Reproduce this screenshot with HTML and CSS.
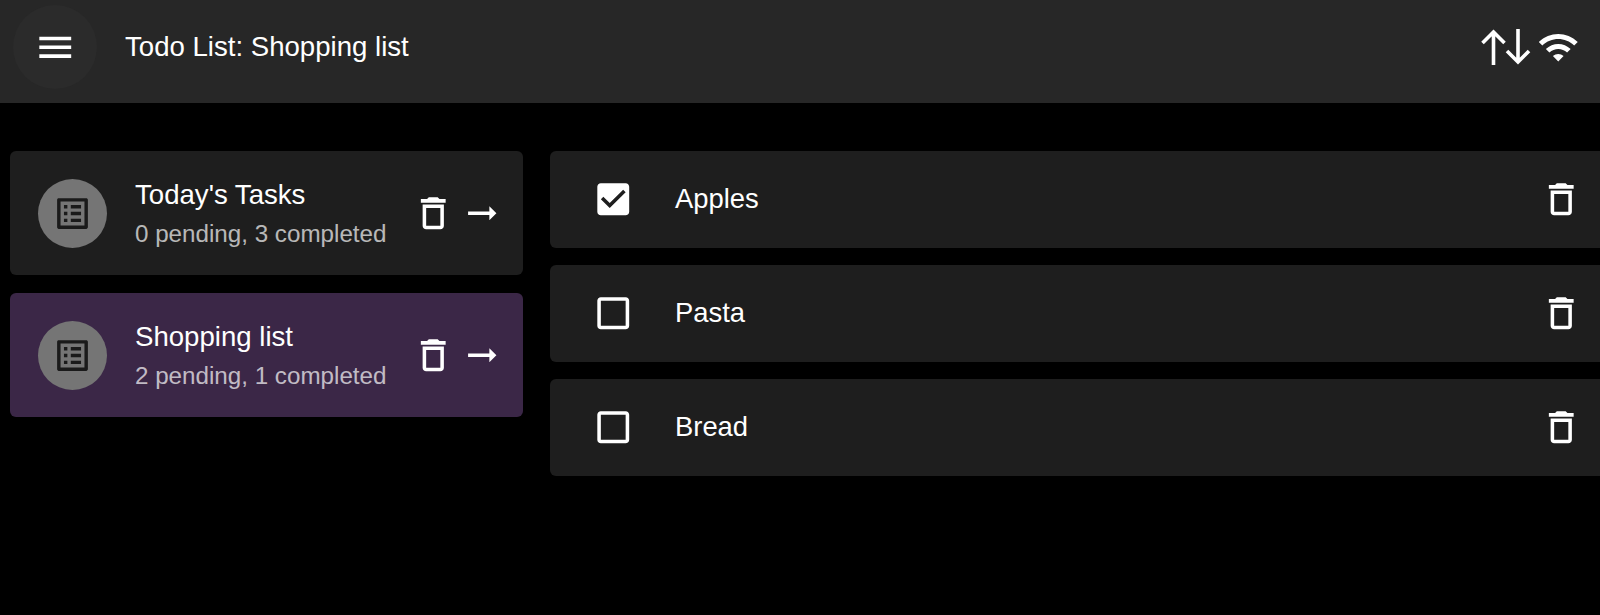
FILE: index.html
```html
<!DOCTYPE html>
<html lang="en">
<head>
  <meta charset="UTF-8" />
  <meta name="viewport" content="width=device-width, initial-scale=1.0"/>
  <title>Todo List: Shopping list</title>
  <link rel="stylesheet" href="styles.css">
</head>
<body>
  <svg class="icon-defs" aria-hidden="true">
    <symbol id="i-menu" viewBox="0 0 24 24"><path d="M3 18h18v-2H3v2zm0-5h18v-2H3v2zm0-7v2h18V6H3z"/></symbol>
    <symbol id="i-wifi" viewBox="0 0 24 24"><path d="M1 9l2 2c4.97-4.97 13.03-4.97 18 0l2-2C16.93 2.93 7.08 2.93 1 9zm8 8l3 3 3-3c-1.65-1.66-4.34-1.66-6 0zm-4-4l2 2c2.76-2.76 7.24-2.76 10 0l2-2C15.14 9.14 8.87 9.14 5 13z"/></symbol>
    <symbol id="i-list" viewBox="0 0 24 24"><path d="M19 5v14H5V5h14m1.1-2H3.9c-.5 0-.9.4-.9.9v16.2c0 .4.4.9.9.9h16.2c.4 0 .9-.5.9-.9V3.9c0-.5-.5-.9-.9-.9zM11 7h6v2h-6V7zm0 4h6v2h-6v-2zm0 4h6v2h-6zM7 7h2v2H7zm0 4h2v2H7zm0 4h2v2H7z"/></symbol>
    <symbol id="i-trash" viewBox="0 0 24 24"><path d="M16 9v10H8V9h8m-1.5-6h-5l-1 1H5v2h14V4h-3.5l-1-1zM18 7H6v12c0 1.1.9 2 2 2h8c1.1 0 2-.9 2-2V7z"/></symbol>
    <symbol id="i-arrow" viewBox="0 0 24 24"><path d="M16.01 11H4v2h12.01v3L20 12l-3.99-4z"/></symbol>
    <symbol id="i-checked" viewBox="0 0 24 24"><path d="M19 3H5c-1.11 0-2 .9-2 2v14c0 1.1.89 2 2 2h14c1.11 0 2-.9 2-2V5c0-1.1-.89-2-2-2zm-9 14l-5-5 1.41-1.41L10 14.17l7.59-7.59L19 8l-9 9z"/></symbol>
    <symbol id="i-blank" viewBox="0 0 24 24"><path d="M19 5v14H5V5h14m0-2H5c-1.1 0-2 .9-2 2v14c0 1.1.9 2 2 2h14c1.1 0 2-.9 2-2V5c0-1.1-.9-2-2-2z"/></symbol>
  </svg>

  <header class="app-bar">
    <button class="menu-btn"><svg class="icon"><use href="#i-menu"/></svg></button>
    <h1 class="app-title">Todo List: Shopping list</h1>
    <div class="status-icons">
      <svg class="sync-icon" viewBox="0 0 50 36" fill="none" stroke="#fff" stroke-width="3.6">
        <path d="M12.5 36V3M1.5 14L12.5 3L23.5 14"/>
        <path d="M37 0V33M26 22L37 33L48 22"/>
      </svg>
      <svg class="icon"><use href="#i-wifi"/></svg>
    </div>
  </header>

  <main class="content">
    <section class="lists">
      <div class="list-card">
        <div class="avatar"><svg class="icon"><use href="#i-list"/></svg></div>
        <div class="list-text">
          <div class="list-name">Today's Tasks</div>
          <div class="list-sub">0 pending, 3 completed</div>
        </div>
        <svg class="icon"><use href="#i-trash"/></svg>
        <svg class="icon"><use href="#i-arrow"/></svg>
      </div>
      <div class="list-card selected">
        <div class="avatar"><svg class="icon"><use href="#i-list"/></svg></div>
        <div class="list-text">
          <div class="list-name">Shopping list</div>
          <div class="list-sub">2 pending, 1 completed</div>
        </div>
        <svg class="icon"><use href="#i-trash"/></svg>
        <svg class="icon"><use href="#i-arrow"/></svg>
      </div>
    </section>

    <section class="items">
      <div class="item-row">
        <svg class="icon"><use href="#i-checked"/></svg>
        <span class="item-name">Apples</span>
        <svg class="icon"><use href="#i-trash"/></svg>
      </div>
      <div class="item-row">
        <svg class="icon"><use href="#i-blank"/></svg>
        <span class="item-name">Pasta</span>
        <svg class="icon"><use href="#i-trash"/></svg>
      </div>
      <div class="item-row">
        <svg class="icon"><use href="#i-blank"/></svg>
        <span class="item-name">Bread</span>
        <svg class="icon"><use href="#i-trash"/></svg>
      </div>
    </section>
  </main>
</body>
</html>
```

FILE: styles.css
```css
html, body {
  margin: 0;
  height: 100%;
  overflow: hidden;
}

body {
  background: #000;
  color: #fff;
  font-family: "Liberation Sans", Arial, sans-serif;
}

.icon-defs {
  display: none;
}

.icon {
  width: 42.5px;
  height: 42.5px;
  flex: none;
  fill: #fff;
}

.app-bar {
  display: flex;
  align-items: center;
  height: 103px;
  box-sizing: border-box;
  padding: 5px 21px 14px 13px;
  background: #272727;
}

.menu-btn {
  display: flex;
  align-items: center;
  justify-content: center;
  width: 84px;
  height: 84px;
  padding: 0;
  border: none;
  border-radius: 50%;
  background: #2b2b2b;
}

.app-title {
  margin: 0 0 0 28px;
  font-size: 27.6px;
  font-weight: 400;
}

.status-icons {
  display: flex;
  align-items: center;
  gap: 6px;
  margin-left: auto;
}

.sync-icon {
  width: 50px;
  height: 36px;
}

.content {
  display: flex;
  gap: 27px;
  padding: 48px 0 0 10px;
  margin-right: -12px;
}

.lists {
  display: flex;
  flex-direction: column;
  gap: 18px;
  width: 513px;
  flex: none;
}

.list-card {
  display: flex;
  align-items: center;
  gap: 6px;
  height: 124px;
  box-sizing: border-box;
  padding: 0 20px 0 28px;
  background: #1e1e1e;
  border-radius: 6px;
}

.list-card.selected {
  background: #3b2747;
}

.avatar {
  display: flex;
  align-items: center;
  justify-content: center;
  width: 69px;
  height: 69px;
  flex: none;
  margin-right: 22px;
  border-radius: 50%;
  background: #757575;
}

.avatar .icon {
  width: 41px;
  height: 41px;
  fill: #1a1a1a;
}

.list-text {
  flex: 1;
  padding-top: 2px;
}

.list-name {
  font-size: 27.6px;
  line-height: 39px;
}

.list-sub {
  font-size: 24.2px;
  line-height: 39px;
  color: rgba(255, 255, 255, 0.7);
}

.items {
  flex: 1;
  display: flex;
  flex-direction: column;
  gap: 17px;
}

.item-row {
  display: flex;
  align-items: center;
  height: 97px;
  box-sizing: border-box;
  padding: 0 30px 0 41.5px;
  background: #1e1e1e;
  border-radius: 6px;
}

.item-name {
  flex: 1;
  margin-left: 41px;
  padding-bottom: 2px;
  font-size: 27.4px;
}
```
